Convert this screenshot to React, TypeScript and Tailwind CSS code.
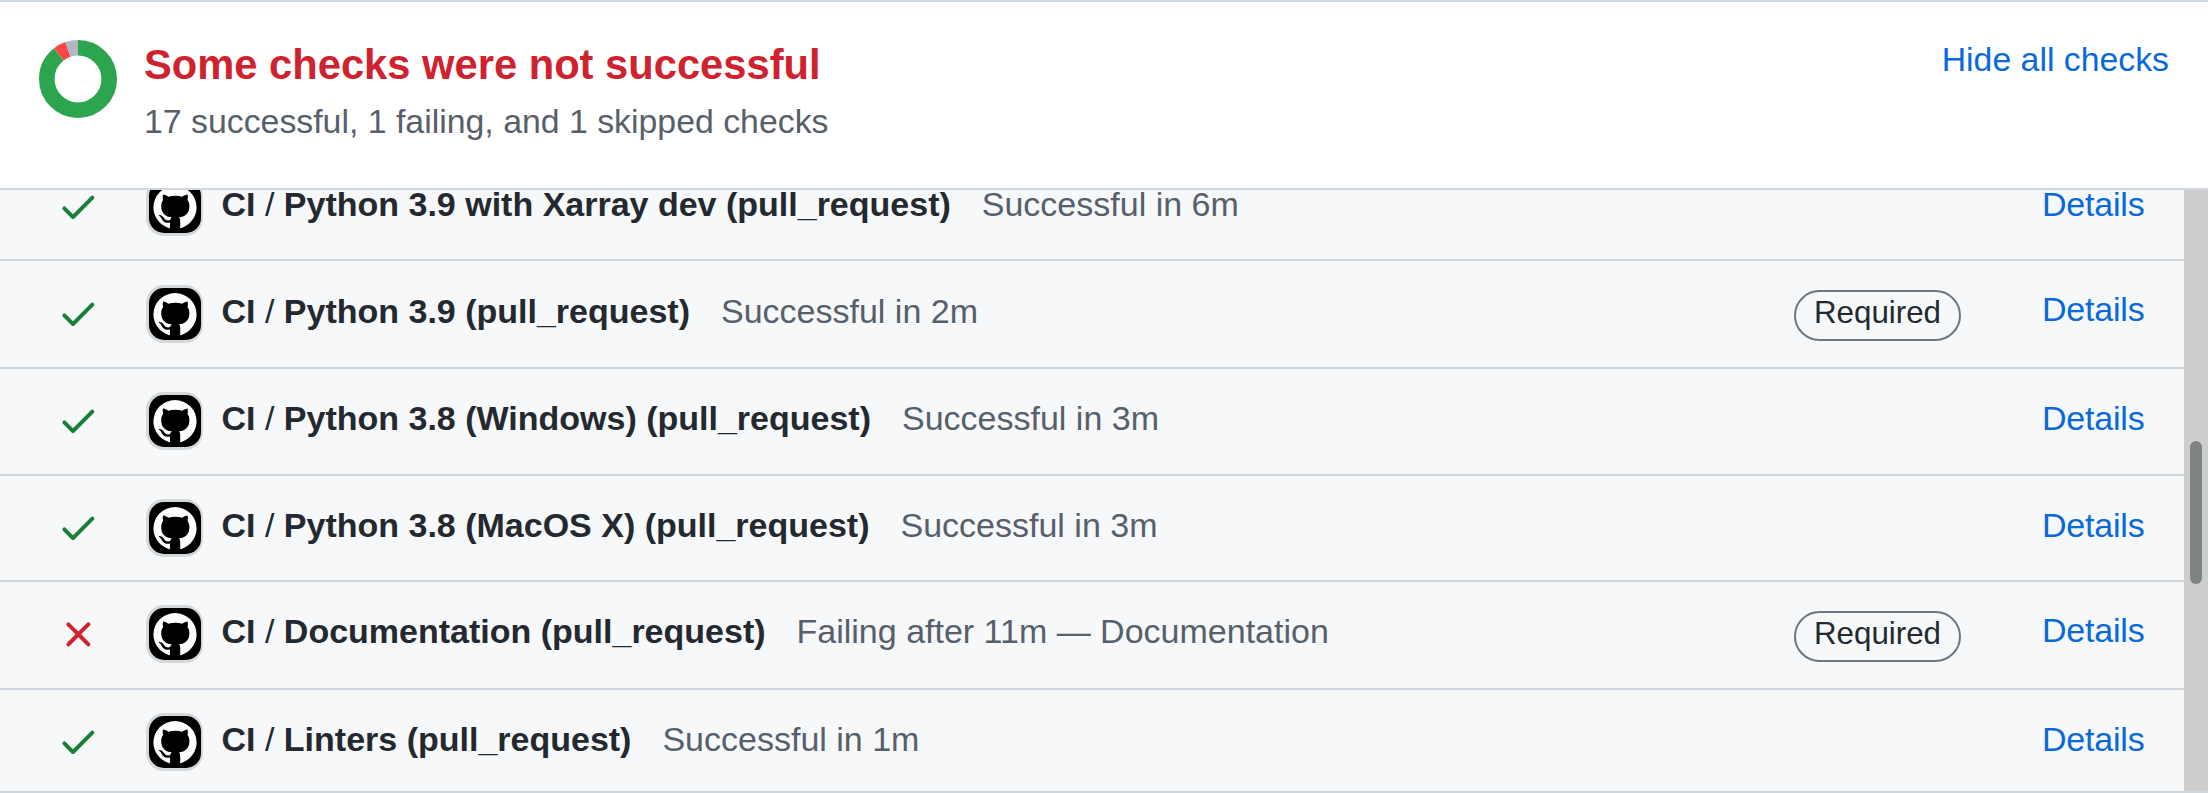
type Check = {
  name: string;
  status: string;
  failed?: boolean;
  required?: boolean;
  row: string;
  icon: string;
  avatar: string;
  text: string;
  link: string;
};

const checks: Check[] = [
  { name: "Python 3.9 with Xarray dev (pull_request)", status: "Successful in 6m", row: "-mt-[37px] h-[106px]", icon: "mt-[30px]", avatar: "mt-[23px]", text: "mt-[29px]", link: "mt-[29px]" },
  { name: "Python 3.9 (pull_request)", status: "Successful in 2m", required: true, row: "h-[108px]", icon: "mt-[31px]", avatar: "mt-[24px]", text: "mt-[30px]", link: "mt-[28px]" },
  { name: "Python 3.8 (Windows) (pull_request)", status: "Successful in 3m", row: "h-[107px]", icon: "mt-[30px]", avatar: "mt-[23px]", text: "mt-[29px]", link: "mt-[29px]" },
  { name: "Python 3.8 (MacOS X) (pull_request)", status: "Successful in 3m", row: "h-[106px]", icon: "mt-[30px]", avatar: "mt-[23px]", text: "mt-[29px]", link: "mt-[29px]" },
  { name: "Documentation (pull_request)", status: "Failing after 11m — Documentation", failed: true, required: true, row: "h-[108px]", icon: "mt-[31px]", avatar: "mt-[23px]", text: "mt-[29px]", link: "mt-[28px]" },
  { name: "Linters (pull_request)", status: "Successful in 1m", row: "h-[106px]", icon: "mt-[30px]", avatar: "mt-[23px]", text: "mt-[29px]", link: "mt-[29px]" },
];

function StatusIcon({ failed }: { failed?: boolean }) {
  return (
    <svg viewBox="0 0 16 16" className={failed ? "size-[42.67px] fill-[#cf222e]" : "size-[42.67px] fill-[#1a7f37]"}>
      {failed ? (
        <path d="M3.72 3.72a.75.75 0 0 1 1.06 0L8 6.94l3.22-3.22a.75.75 0 1 1 1.06 1.06L9.06 8l3.22 3.22a.75.75 0 1 1-1.06 1.06L8 9.06l-3.22 3.22a.75.75 0 0 1-1.06-1.06L6.94 8 3.72 4.78a.75.75 0 0 1 0-1.06Z" />
      ) : (
        <path d="M13.78 4.22a.75.75 0 0 1 0 1.06l-7.25 7.25a.75.75 0 0 1-1.06 0L2.22 9.28a.75.75 0 0 1 1.06-1.06L6 10.94l6.72-6.72a.75.75 0 0 1 1.06 0Z" />
      )}
    </svg>
  );
}

function Avatar() {
  return (
    <div className="h-[58px] w-[57px] rounded-[18px] bg-[#d5d8da] pl-[3px] pt-[3px]">
      <svg viewBox="0 0 52 52" className="size-[52px] rounded-[15px] bg-black">
        <path
          fill="#fff"
          d="M26 5a21.600 21.600 0 0 1 21.600 21.600C47.600 36 41 44.500 32 47.200c-.5.1-.8-.2-.8-.7v-6.300c0-1.600-.3-2.900-1.200-3.900 6-.8 10.400-3.600 10.400-11.400 0-2.500-.7-4.400-1.900-6 .5-1.700.5-3.600 0-5.400-1.800.1-3.400.9-5.200 2.300a27 27 0 0 0-14 0c-1.800-1.400-3.400-2.200-5.200-2.300-.5 1.800-.5 3.700 0 5.400-1.200 1.600-1.900 3.500-1.900 6 0 7.800 4.500 10.600 10.500 11.400-.8.700-1.300 1.600-1.500 2.800-2.400.8-4.500.3-6-1.900-1.200-1.800-2.600-3.200-4.900-3.100-.7.1-.6.6 0 1 2.300 1 2.600 5.500 6 6.300 1.500.4 3.200.3 4.700 0v5.100c0 .5-.3.8-.8.700C11 44.500 4.400 36 4.400 26.600A21.600 21.600 0 0 1 26 5Z"
        />
      </svg>
    </div>
  );
}

function Donut() {
  return (
    <svg viewBox="0 0 78 78" className="size-[78px]">
      <g fill="none" strokeWidth="15.6" transform="rotate(-90 39 39)">
        <circle cx="39" cy="39" r="31.2" pathLength="19" stroke="#2da44e" strokeDasharray="17 2" />
        <circle cx="39" cy="39" r="31.2" pathLength="19" stroke="#fa4549" strokeDasharray="1 18" strokeDashoffset="-17" />
        <circle cx="39" cy="39" r="31.2" pathLength="19" stroke="#afb8c1" strokeDasharray="1 18" strokeDashoffset="-18" />
      </g>
    </svg>
  );
}

function CheckRow({ check }: { check: Check }) {
  return (
    <li className={`flex shrink-0 items-start border-t-2 border-[#d0d7de] pl-[56.6px] ${check.row}`}>
      <div className={check.icon}>
        <StatusIcon failed={check.failed} />
      </div>
      <div className={`ml-[46.73px] ${check.avatar}`}>
        <Avatar />
      </div>
      <div className={`ml-[18.5px] whitespace-pre leading-10 ${check.text}`}>
        <strong className="font-bold text-[#24292f]">
          CI <span className="font-normal">/</span> {check.name}
        </strong>
        <span className="ml-[31px] text-[#57606a]">{check.status}</span>
      </div>
      <div className="ml-auto flex items-start">
        {check.required && (
          <span className="mt-[29px] flex h-[51px] w-[167px] justify-center rounded-full border-2 border-[#6e7781] text-[31.3px] leading-[42px] text-[#24292f]">
            Required
          </span>
        )}
        <a className={`ml-[81px] w-[142px] leading-10 tracking-[-0.2px] text-[#0969da] ${check.link}`}>Details</a>
      </div>
    </li>
  );
}

export default function App() {
  return (
    <div className="flex h-[793px] w-[2208px] flex-col overflow-hidden border-y-2 border-[#d0d7de] bg-white font-['Liberation_Sans',Arial,sans-serif] text-[34px]">
      <header className="flex h-[186px] shrink-0 items-start pl-[39px] pr-[39px]">
        <div className="mt-[38px]">
          <Donut />
        </div>
        <div className="ml-[27px] mt-[38px] whitespace-nowrap">
          <h1 className="text-[41.7px] font-bold leading-[50px] text-[#cf222e]">Some checks were not successful</h1>
          <p className="mt-[11px] text-[33.85px] leading-10 text-[#57606a]">17 successful, 1 failing, and 1 skipped checks</p>
        </div>
        <a className="ml-auto mt-[37px] text-[33.8px] leading-10 text-[#0969da]">Hide all checks</a>
      </header>
      <div className="flex min-h-0 flex-1 border-t-2 border-[#d0d7de]">
        <ul className="flex min-w-0 flex-1 flex-col overflow-hidden bg-[#f6f8fa]">
          {checks.map((check) => (
            <CheckRow key={check.name} check={check} />
          ))}
        </ul>
        <div className="w-6 bg-[#cdcdcd] pt-[251px]">
          <div className="mx-auto h-[143px] w-3 rounded-full bg-[#7f8483]" />
        </div>
      </div>
    </div>
  );
}
